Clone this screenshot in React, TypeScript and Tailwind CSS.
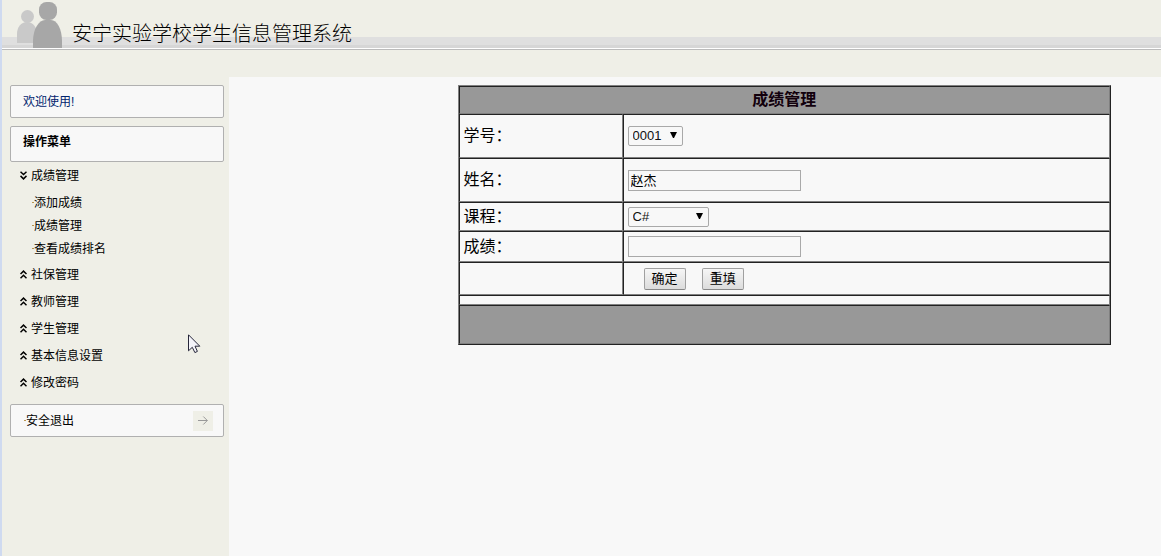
import { useState } from 'react'
import type { FormEvent, ReactNode } from 'react'

interface MenuGroup {
  title: string
  items: string[]
}

const MENU: MenuGroup[] = [
  { title: '成绩管理', items: ['添加成绩', '成绩管理', '查看成绩排名'] },
  { title: '社保管理', items: [] },
  { title: '教师管理', items: [] },
  { title: '学生管理', items: [] },
  { title: '基本信息设置', items: [] },
  { title: '修改密码', items: [] },
]

const STUDENTS: Record<string, string> = {
  '0001': '赵杰',
}

const COURSES = ['C#']

// Light edges top/left on the table, dark on the cells: gives the old two-tone rule
const CELL = 'border border-t-[#222] border-l-[#222] border-b-[#808080] border-r-[#808080]'
const BUTTON =
  'h-[22px] rounded-xs border border-[#a0a0a0] border-b-[#888] bg-linear-to-b from-[#f6f6f6] to-[#dcdcdc] px-[7px] text-[13px] leading-4'

// ─── Drawings ────────────────────────────────────────────────────────────────

function PeopleLogo() {
  return (
    <svg className="h-12 w-[46px] shrink-0" viewBox="0 0 46 48">
      <g fill="#c9c9c9">
        <circle cx="10.5" cy="16.5" r="6.5" />
        <path d="M0 43V34C0 27 4 22 10 22s10 5 10 12v9z" />
      </g>
      <g fill="#a7a7a7">
        <rect x="22" y="2" width="18" height="18" rx="7.5" />
        <path d="M16 48V41C16 29 22 20 28 20h6c6 0 11 9 11 21v7z" />
      </g>
    </svg>
  )
}

function Chevrons({ open }: { open: boolean }) {
  return (
    <svg className="h-[9px] w-[7px] shrink-0" viewBox="0 0 7 9" fill="none" stroke="#000" strokeWidth="1.5">
      {open ? (
        <path d="M0.5 0.7L3.5 3.5L6.5 0.7M0.5 4.9L3.5 7.9L6.5 4.9" />
      ) : (
        <path d="M0.5 4L3.5 1.1L6.5 4M0.5 8.2L3.5 5.3L6.5 8.2" />
      )}
    </svg>
  )
}

function Pointer() {
  return (
    <svg className="pointer-events-none absolute left-[186px] top-[334px] h-5 w-[13px]" viewBox="0 0 13 20">
      <path
        d="M0.5 0.8V16.8L4.3 13.3L6.9 18.6L9.4 17.4L7 12.2H11.8Z"
        fill="#f4f4fa"
        stroke="#26263a"
        strokeWidth="1"
      />
    </svg>
  )
}

function Bullet() {
  return <span className="h-px w-0.5 shrink-0 bg-[#b8944c]" />
}

// ─── Form pieces ─────────────────────────────────────────────────────────────

interface PickerProps {
  id: string
  value: string
  options: string[]
  width: string
  onChange: (value: string) => void
}

function Picker({ id, value, options, width, onChange }: PickerProps) {
  return (
    <span className={`relative block h-5 ${width}`}>
      <select
        id={id}
        value={value}
        onChange={(e) => onChange(e.target.value)}
        className="block h-5 w-full appearance-none rounded-xs border border-[#a9a9a9] bg-[#f8f8f8] pl-1 font-['Liberation_Sans',sans-serif] text-[13px] leading-4 text-[#111]"
      >
        {options.map((o) => (
          <option key={o}>{o}</option>
        ))}
      </select>
      <svg className="pointer-events-none absolute right-1.5 top-1.5 h-1.5 w-[7px]" viewBox="0 0 7 6">
        <path d="M0 0H7L4 6H3Z" fill="#000" />
      </svg>
    </span>
  )
}

interface FieldRowProps {
  id: string
  label: string
  height: string
  children: ReactNode
}

function FieldRow({ id, label, height, children }: FieldRowProps) {
  return (
    <tr className={height}>
      <td className={`${CELL} px-1`}>
        <label htmlFor={id} className="block">
          {label}
        </label>
      </td>
      <td className={`${CELL} px-1`}>{children}</td>
    </tr>
  )
}

function ScoreForm() {
  const [studentId, setStudentId] = useState('0001')
  const [name, setName] = useState(STUDENTS['0001'])
  const [course, setCourse] = useState(COURSES[0])
  const [score, setScore] = useState('')

  const selectStudent = (id: string) => {
    setStudentId(id)
    setName(STUDENTS[id])
  }

  const handleSubmit = (e: FormEvent) => e.preventDefault()

  const handleReset = () => {
    selectStudent('0001')
    setCourse(COURSES[0])
    setScore('')
  }

  const inputClass =
    'block h-[21px] w-[173px] border border-[#a9a9a9] bg-[#f8f8f8] px-0.5 pb-0.5 text-[13px] leading-4 text-black'

  return (
    <form onSubmit={handleSubmit} className="mr-[50px] ml-auto w-[calc(70%+1px)]">
      <table className="w-full table-fixed border-separate border-spacing-0 border border-t-[#808080] border-l-[#808080] border-b-[#222] border-r-[#222] text-base leading-5">
        <colgroup>
          <col className="w-[164px]" />
          <col />
        </colgroup>
        <thead>
          <tr className="h-7 bg-[#989898]">
            <th colSpan={2} className={`${CELL} font-bold text-[#12000c]`}>
              成绩管理
            </th>
          </tr>
        </thead>
        <tbody>
          <FieldRow id="student" label="学号：" height="h-11">
            <Picker
              id="student"
              value={studentId}
              options={Object.keys(STUDENTS)}
              width="w-[55px]"
              onChange={selectStudent}
            />
          </FieldRow>
          <FieldRow id="name" label="姓名：" height="h-11">
            <input id="name" type="text" value={name} onChange={(e) => setName(e.target.value)} className={inputClass} />
          </FieldRow>
          <FieldRow id="course" label="课程：" height="h-[29px]">
            <Picker id="course" value={course} options={COURSES} width="w-[81px]" onChange={setCourse} />
          </FieldRow>
          <FieldRow id="score" label="成绩：" height="h-[31px]">
            <input id="score" type="text" value={score} onChange={(e) => setScore(e.target.value)} className={inputClass} />
          </FieldRow>
          <tr className="h-[33px]">
            <td className={CELL} />
            <td className={`${CELL} pl-5`}>
              <div className="flex gap-4">
                <button type="submit" className={BUTTON}>
                  确定
                </button>
                <button type="button" onClick={handleReset} className={BUTTON}>
                  重填
                </button>
              </div>
            </td>
          </tr>
          <tr className="h-2.5">
            <td colSpan={2} className={CELL} />
          </tr>
        </tbody>
        <tfoot>
          <tr className="h-[39px] bg-[#989898]">
            <td colSpan={2} className={CELL} />
          </tr>
        </tfoot>
      </table>
    </form>
  )
}

// ─── Sidebar ─────────────────────────────────────────────────────────────────

function Sidebar() {
  const [open, setOpen] = useState('成绩管理')

  return (
    <aside className="w-[227px] shrink-0 pt-2 pr-[5px] pl-2 text-xs leading-4">
      <p className="flex h-[33px] items-center rounded-xs border border-[#b0b0b0] bg-[#f8f8f8] px-3 text-[#00246e]">
        欢迎使用!
      </p>
      <h2 className="mt-2 flex h-9 items-center rounded-xs border border-[#b0b0b0] bg-[#f8f8f8] px-3 pb-1 font-bold">
        操作菜单
      </h2>
      <nav>
        {MENU.map((group) => (
          <div key={group.title}>
            <button
              type="button"
              aria-expanded={open === group.title}
              onClick={() => setOpen(open === group.title ? '' : group.title)}
              className="flex h-[27px] w-full items-center gap-1 pl-2.5"
            >
              <Chevrons open={open === group.title} />
              {group.title}
            </button>
            {open === group.title && group.items.length > 0 && (
              <ul className="pt-0.5 pb-px">
                {group.items.map((item) => (
                  <li key={item}>
                    <a href="#" className="flex h-[23px] items-center pl-[22px]">
                      <Bullet />
                      {item}
                    </a>
                  </li>
                ))}
              </ul>
            )}
          </div>
        ))}
      </nav>
      <a
        href="#"
        className="mt-2 flex h-[33px] items-center rounded-xs border border-[#b0b0b0] bg-[#f8f8f8] pr-2.5 pl-[13px]"
      >
        <Bullet />
        安全退出
        <span className="ml-auto flex h-5 w-5 items-center justify-center bg-[#efefe7]">
          <svg className="h-[9px] w-2.5" viewBox="0 0 10 9" fill="none" stroke="#999">
            <path d="M0 4.5H9.3M5.3 0.5L9.3 4.5L5.3 8.5" />
          </svg>
        </span>
      </a>
    </aside>
  )
}

export default function App() {
  return (
    <div className="relative flex min-h-screen flex-col border-l-2 border-[#cfdaf0] bg-[#efefe7] font-['Liberation_Sans','Noto_Sans_CJK_SC',sans-serif] text-black">
      {/* Banner: two grey bands, a white line and a rule along the bottom */}
      <header className="h-[50px] border-b border-[#bbb] bg-[linear-gradient(to_top,#fff_1px,#d6d6d6_1px,#d6d6d6_4px,#dfdfdf_4px,#dfdfdf_12px,transparent_12px)]">
        <div className="flex h-12 items-end gap-[9px] pl-[15px]">
          <PeopleLogo />
          <h1 className="text-xl leading-7 font-light">安宁实验学校学生信息管理系统</h1>
        </div>
      </header>

      <div className="mt-[27px] flex grow">
        <Sidebar />
        <main className="grow bg-[#f8f8f8] pt-2">
          <ScoreForm />
        </main>
      </div>

      <Pointer />
    </div>
  )
}
